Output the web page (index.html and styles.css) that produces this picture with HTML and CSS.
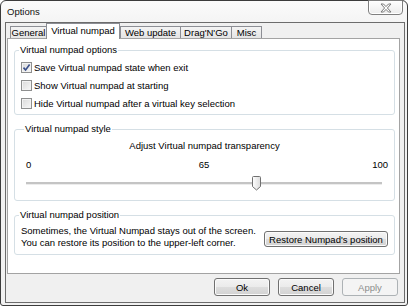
FILE: index.html
```html
<!DOCTYPE html>
<html>
<head>
<meta charset="utf-8">
<title>Options</title>
<link rel="stylesheet" href="styles.css">
</head>
<body>
<div class="window">
  <div class="titlebar">
    <span class="title">Options</span>
    <div class="close">
      <svg width="12" height="10" viewBox="0 0 12 10"><polygon points="1,1 3.5,1 6,3.6 8.5,1 11,1 7.4,5 11,9 8.5,9 6,6.4 3.5,9 1,9 4.6,5" fill="#ffffff" stroke="#7a7a7a" stroke-width="1" stroke-linejoin="round"/></svg>
    </div>
  </div>
  <div class="client">
    <div class="tabs">
      <div class="tab tab-general">General</div>
      <div class="tab tab-active">Virtual numpad</div>
      <div class="tab tab-web">Web update</div>
      <div class="tab tab-drag">Drag'N'Go</div>
      <div class="tab tab-misc">Misc</div>
    </div>
    <div class="pane">
      <fieldset class="group group-options">
        <legend>Virtual numpad options</legend>
        <label class="row"><span class="cb"><svg width="9" height="9" viewBox="0 0 9 9"><path d="M1.5 4.6 L3.6 7 L7.6 1.6" fill="none" stroke="#3a4f8a" stroke-width="1.6"/></svg></span>Save Virtual numpad state when exit</label>
        <label class="row"><span class="cb"></span>Show Virtual numpad at starting</label>
        <label class="row"><span class="cb"></span>Hide Virtual numpad after a virtual key selection</label>
      </fieldset>
      <fieldset class="group group-style">
        <legend>Virtual numpad style</legend>
        <div class="adjust">Adjust Virtual numpad transparency</div>
        <div class="scale">
          <span class="lo">0</span>
          <span class="mid">65</span>
          <span class="hi">100</span>
        </div>
        <div class="slider">
          <div class="track" style="--value:65">
            <svg class="thumb" width="9" height="15" viewBox="0 0 9 15">
              <defs><linearGradient id="tg" x1="0" y1="0" x2="1" y2="0"><stop offset="0" stop-color="#ffffff"/><stop offset="1" stop-color="#dcdcdc"/></linearGradient></defs>
              <path d="M1.5 0.5 H7.5 Q8.5 0.5 8.5 1.5 V10.5 L4.5 14 L0.5 10.5 V1.5 Q0.5 0.5 1.5 0.5 Z" fill="url(#tg)" stroke="#707070" stroke-width="1"/>
            </svg>
          </div>
        </div>
      </fieldset>
      <fieldset class="group group-position">
        <legend>Virtual numpad position</legend>
        <div class="position">
          <p class="note">Sometimes, the Virtual Numpad stays out of the screen.<br>You can restore its position to the upper-left corner.</p>
          <button class="btn btn-restore">Restore Numpad's position</button>
        </div>
      </fieldset>
    </div>
    <div class="footer">
      <button class="btn btn-dlg">Ok</button>
      <button class="btn btn-dlg">Cancel</button>
      <button class="btn btn-dlg btn-disabled">Apply</button>
    </div>
  </div>
</div>
</body>
</html>
```
FILE: styles.css
```css
html, body {
  margin: 0;
  padding: 0;
  background: #ffffff;
}
body {
  width: 408px;
  height: 306px;
  overflow: hidden;
  font-family: "Liberation Sans", Arial, sans-serif;
  font-size: 9.5px;
  color: #000;
}
.window {
  box-sizing: border-box;
  width: 408px;
  height: 306px;
  border: 1px solid #3c3c3c;
  border-radius: 6px 6px 3px 3px;
  background: linear-gradient(#fbfbfb, #f1f1f1 30px, #f1f1f1);
  display: flex;
  flex-direction: column;
  padding: 0 2px 2px 4px;
}
.titlebar {
  height: 21px;
  flex: none;
  display: flex;
  justify-content: space-between;
  align-items: flex-start;
}
.title {
  padding-left: 2px;
  line-height: 21px;
  font-size: 9.5px;
  color: #111;
}
.close {
  box-sizing: border-box;
  width: 35px;
  height: 15px;
  margin-top: -1px;
  margin-right: 2px;
  border: 1px solid #7f7f7f;
  border-radius: 0 0 4px 4px;
  background: linear-gradient(#fefefe, #ececec);
  box-shadow: inset 0 0 0 1px #ffffff;
  display: flex;
  align-items: center;
  justify-content: center;
}
.close svg { display: block; }
.client {
  flex: 1;
  border: 1px solid #6c6c6c;
  background: #f0f0f0;
  display: flex;
  flex-direction: column;
  min-height: 0;
}
.tabs {
  height: 15px;
  flex: none;
  display: flex;
  align-items: flex-end;
  padding-left: 4px;
}
.tab {
  box-sizing: border-box;
  height: 12px;
  line-height: 11px;
  border: 1px solid #8c8e94;
  border-bottom: none;
  background: linear-gradient(#f4f4f4, #e4e4e4);
  text-align: center;
  white-space: nowrap;
  margin-left: -1px;
}
.tab-general { width: 37px; margin-left: 0; }
.tab-active {
  width: 74px;
  height: 16px;
  line-height: 13px;
  margin-bottom: -1px;
  background: #ffffff;
  position: relative;
  z-index: 1;
}
.tab-web { width: 61px; margin-left: 0; }
.tab-drag { width: 52px; }
.tab-misc { width: 31px; }
.pane {
  box-sizing: border-box;
  height: 236px;
  flex: none;
  margin: 0 4px 0 1px;
  border: 1px solid #a3a3a3;
  background: #ffffff;
  padding: 0 4px 0 6px;
}
.group {
  margin: 8px 0 0 0;
  border: 1px solid #d5dfe5;
  border-radius: 3px;
  padding: 0 6px;
  min-inline-size: 0;
}
.group-options { margin-top: 5px; padding-top: 2px; padding-bottom: 2px; }
.group legend {
  padding: 0 1px;
  margin-left: -2px;
  line-height: 12px;
  height: 12px;
}
.row {
  display: flex;
  align-items: center;
  height: 18px;
  white-space: nowrap;
}
.cb {
  box-sizing: border-box;
  width: 11px;
  height: 11px;
  margin-right: 2px;
  border: 1px solid #8e8f8f;
  background: linear-gradient(135deg, #d9d9d9, #f7f7f7);
  box-shadow: inset 0 0 0 1px #f2f2f2;
  display: flex;
  align-items: center;
  justify-content: center;
  flex: none;
}
.cb svg { display: block; }
.group-style { padding: 5px 6px 9px 11px; }
.adjust {
  line-height: 12px;
  text-align: center;
  padding-right: 5px;
}
.scale {
  margin-top: 7px;
  line-height: 12px;
  display: grid;
  grid-template-columns: 1fr auto 1fr;
}
.scale .mid { margin-right: 6px; }
.scale .hi { text-align: right; }
.slider {
  margin-top: 6px;
  height: 14px;
  padding-right: 6px;
  padding-top: 5px;
  box-sizing: border-box;
}
.track {
  position: relative;
  height: 2px;
  background: #c4c4c4;
  border-bottom: 1px solid #ececec;
}
.thumb {
  position: absolute;
  top: -6px;
  left: calc((100% - 9px) * var(--value) / 100);
  display: block;
}
.group-position { padding: 4px 6px 5px 6px; }
.position {
  display: flex;
  justify-content: space-between;
  align-items: flex-start;
}
.note {
  margin: 0;
  line-height: 12px;
  white-space: nowrap;
}
.btn {
  box-sizing: border-box;
  font-family: inherit;
  font-size: 9.5px;
  color: #000;
  border: 1px solid #707070;
  border-radius: 3px;
  background: linear-gradient(#f3f3f3 0%, #ebebeb 50%, #dedede 50%, #d2d2d2 100%);
  box-shadow: inset 0 0 0 1px #fbfbfb;
  padding: 0;
  margin: 0;
  text-align: center;
}
.btn-restore {
  width: 124px;
  height: 16px;
  margin-top: 6px;
}
.footer {
  flex: 1;
  display: flex;
  justify-content: flex-end;
  gap: 8px;
  padding: 4px 6px 0 0;
  border-top: 0;
}
.btn-dlg {
  width: 56px;
  height: 18px;
}
.btn-disabled {
  border-color: #adb2b5;
  background: #f4f4f4;
  box-shadow: none;
  color: #8d8d8d;
}
```
